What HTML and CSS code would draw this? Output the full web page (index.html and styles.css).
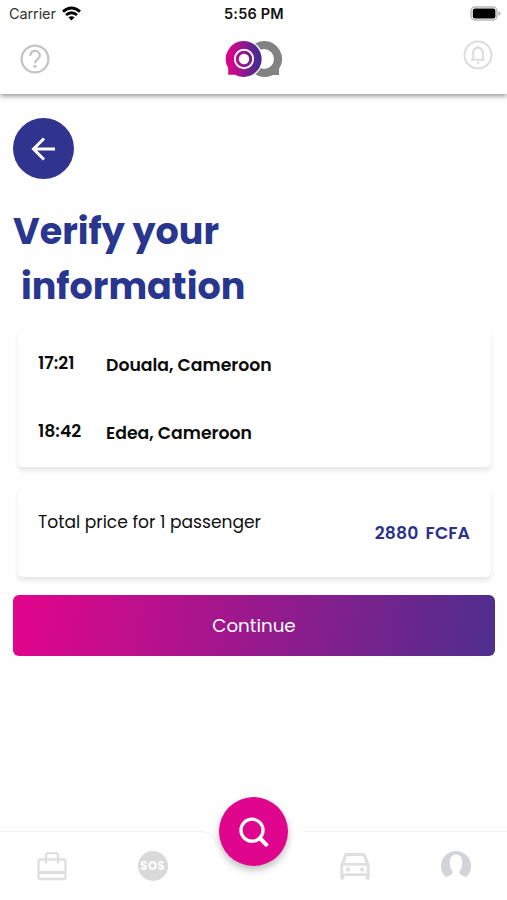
FILE: index.html
```html
<!DOCTYPE html>
<html lang="en">
<head>
<meta charset="utf-8">
<title>Verify your information</title>
<link rel="stylesheet" href="styles.css">
</head>
<body>
<div class="app">
  <header class="header">
    <div class="status">
      <div class="carrier"><span>Carrier</span>
        <svg width="19" height="15" viewBox="0 0 19 15"><g fill="none" stroke="#000" stroke-width="2.9"><path d="M1 5.6Q9.5-1.8 18 5.6"/><path d="M4 9Q9.5 4.4 15 9"/></g><path d="M6.4 11.3Q9.5 9 12.6 11.3L9.5 14.5Z"/></svg>
      </div>
      <div class="time">5:56 PM</div>
      <svg class="battery" width="31" height="15" viewBox="0 0 31 15"><rect x="1" y="1" width="26" height="13" rx="4" fill="#fff" stroke="#b8b8b8" stroke-width="1.5"/><rect x="2.8" y="2.6" width="22.6" height="9.8" rx="2.2"/><path d="M28.5 5.2q2.2.6 2.2 2.3t-2.2 2.3Z" fill="#b8b8b8"/></svg>
    </div>
    <div class="toolbar">
      <svg class="help" width="30" height="30" viewBox="0 0 30 30" fill="none" stroke="#c4c4c4" stroke-width="2.3"><circle cx="15" cy="15" r="13.4"/><path d="M10.3 11.7C10.3 5 19.8 5.6 19.8 11.4C19.8 15 15.1 15.2 15.1 19.2"/><path d="M15 21v2.8" stroke-width="2.8"/></svg>
      <svg class="logo" width="58" height="38" viewBox="0 0 58 38">
        <defs><linearGradient id="brand"><stop offset=".12" stop-color="#d8058c"/><stop offset=".85" stop-color="#50298f"/><stop offset="1" stop-color="#3d3093"/></linearGradient></defs>
        <path fill="#828282" fill-rule="evenodd" d="M39 1a18 18 0 0 1 15 28v6h-6A18 18 0 1 1 39 1ZM39 9a10 10 0 1 0 0 20a10 10 0 0 0 0-20Z"/>
        <circle cx="19" cy="19" r="19" fill="#fff"/>
        <path fill="url(#brand)" d="M19 1a18 18 0 1 1-9 33.8H3.2V28A18 18 0 0 1 19 1Z"/>
        <circle cx="19" cy="19" r="9.2" fill="none" stroke="#fff" stroke-width="1.9"/><circle cx="19" cy="19" r="5.2" fill="#fff"/>
      </svg>
      <svg class="bell" width="30" height="30" viewBox="0 0 30 30" fill="none" stroke="#dcdcdc" stroke-width="2"><circle cx="15" cy="15" r="13.5"/><path d="M8.2 19.7h13.6M10.2 19.7v-6.2C10.2 9.7 12 7.8 15 7.8s4.8 1.9 4.8 5.7v6.2M15 7.8V5.7"/><path d="M13.8 22.8h2.4"/></svg>
    </div>
  </header>
  <main class="main">
    <button class="back" aria-label="Back"><svg width="25" height="24" viewBox="0 0 25 24" fill="none" stroke="#fff" stroke-width="3"><path d="M24 12H2.8M13 1.5L2.5 12L13 22.5"/></svg></button>
    <h1 class="title"><span class="first">Verify your</span><span class="second">information</span></h1>
    <section class="card trip">
      <div class="stop"><span class="hour">17:21</span><span class="place">Douala, Cameroon</span></div>
      <div class="stop"><span class="hour">18:42</span><span class="place">Edea, Cameroon</span></div>
    </section>
    <section class="card fare"><span class="label">Total price for 1 passenger</span><span class="price">2880 FCFA</span></section>
    <button class="continue">Continue</button>
  </main>
  <nav class="nav">
    <svg class="edge" width="507" height="70" viewBox="0 0 507 70"><path d="M0 1.5H201Q213 1.5 216 14C221 38 234 50 254 50S287 38 292 14Q295 1.5 307 1.5H507V70H0Z" fill="#fff"/><path d="M0 1.5H201Q213 1.5 216 14M303 1.5H507" fill="none" stroke="#f5f5f5" stroke-width="1.3"/></svg>
    <div class="item"><svg width="30" height="30" viewBox="0 0 30 30" fill="none" stroke="#dfdfdf" stroke-width="2.3"><rect x="1.5" y="8.5" width="27" height="19.5" rx="1.8"/><path d="M1.5 21.5h27" stroke-width="3.2"/><path d="M9 12.5V4.2Q9 2.2 11 2.2h8q2 0 2 2v8.3"/></svg></div>
    <div class="item"><span class="sos">SOS</span></div>
    <div class="item"><button class="search" aria-label="Search"><svg width="30" height="30" viewBox="0 0 30 30" fill="none" stroke="#fff"><circle cx="13" cy="13.2" r="11" stroke-width="3.3"/><path d="M21 21.3L27.2 27.6" stroke-width="4.2" stroke-linecap="round"/></svg></button></div>
    <div class="item"><svg width="30" height="30" viewBox="0 0 30 30"><path fill="#dfdfdf" fill-rule="evenodd" d="M6.2 2h17.6q1.5 0 2 1.5L29.7 14v13.5q0 1-1 1h-2q-1 0-1-1V25H4.3v2.5q0 1-1 1h-2q-1 0-1-1V14L4.2 3.5Q4.7 2 6.2 2ZM7 5L4.5 12h21L23 5ZM3.3 14.8v7.5h23.4v-7.5Z"/><circle cx="7.9" cy="18.4" r="2.2" fill="#dfdfdf"/><circle cx="22.1" cy="18.4" r="2.2" fill="#dfdfdf"/></svg></div>
    <div class="item"><svg width="30" height="30" viewBox="0 0 30 30"><path fill="#d2d4d7" d="M4.8 26A15 15 0 1 1 25.2 26C21 24.2 17.8 23.5 18.5 20C20.6 17.8 21.2 15.2 21.2 11C21.2 6.2 18.8 3.4 15 3.4S8.8 6.2 8.8 11c0 4.2.6 6.8 2.7 9C12.2 23.5 9 24.2 4.8 26Z"/></svg></div>
  </nav>
</div>
</body>
</html>
```
FILE: styles.css
```css
* { box-sizing: border-box; }
body { margin: 0; background: #fefefe; font-family: Poppins, Inter, sans-serif; color: #111; }
button { border: 0; padding: 0; font: inherit; }
svg { display: block; flex: none; }
span { white-space: nowrap; }
.app { width: 507px; height: 900px; display: flex; flex-direction: column; overflow: hidden; }
.header { height: 94px; flex: none; background: #fff; box-shadow: 0 2px 5px rgba(0, 0, 0, .42); }
.status { height: 28px; display: grid; grid-template-columns: 1fr auto 1fr; align-items: center; padding: 0 6px 0 9px; font: 14.5px Inter, sans-serif; }
.carrier { display: flex; align-items: center; gap: 6px; color: #333; letter-spacing: -.1px; }
.carrier span { margin-top: -2px; }
.carrier svg { margin-top: -2px; }
.time { font-weight: 600; letter-spacing: .2px; color: #111; margin: -2px 1px 0 -1px; }
.battery { justify-self: end; margin-top: -2px; }
.toolbar { display: grid; grid-template-columns: 1fr auto 1fr; align-items: start; padding: 12px 14px 0 20px; }
.help { margin-top: 4px; }
.logo { margin-left: -6px; }
.bell { justify-self: end; }
.main { flex: 1; padding: 24px 12px 0 13px; display: flex; flex-direction: column; }
.back { width: 61px; height: 61px; border-radius: 50%; background: #30348f; display: flex; align-items: center; justify-content: center; }
.title { margin: 25px 0 0; font-size: 36.5px; line-height: 55px; font-weight: 700; color: #29368f; display: flex; flex-direction: column; align-items: flex-start; }
.second { margin-left: 8px; }
.card { margin: 0 4px 0 5px; background: #fff; border-radius: 5px; box-shadow: 0 4px 4px rgba(0, 0, 0, .085); }
.trip { margin-top: 16px; height: 137px; padding: 19px 20px; display: flex; flex-direction: column; gap: 40px; }
.stop { display: grid; grid-template-columns: 68px 1fr; height: 28px; line-height: 28px; font-size: 17.3px; font-weight: 600; color: #0b0b0b; }
.place { padding-top: 2px; }
.fare { margin-top: 21px; height: 89px; padding: 20px 21px 0 20px; display: flex; justify-content: space-between; line-height: 28px; }
.label { font-size: 17.1px; }
.price { margin-top: 11px; font-size: 17.3px; font-weight: 600; color: #2d318b; word-spacing: 3px; letter-spacing: .1px; }
.continue { margin-top: 18px; height: 61px; border-radius: 6px; background: linear-gradient(100deg, #e1058c 2%, #512d8e 98%); color: #fff; font-size: 18.3px; }
.nav { position: relative; height: 70px; flex: none; padding: 21px 0 0 1px; display: grid; grid-template-columns: repeat(5, 101.2px); }
.edge { position: absolute; left: 0; top: 0; }
.item { position: relative; display: flex; justify-content: center; height: 30px; }
.sos { width: 30px; height: 30px; border-radius: 50%; background: #d9d9d9; color: #fff; font-size: 11.5px; font-weight: 700; line-height: 30px; text-align: center; letter-spacing: .6px; }
.search { flex: none; width: 69px; height: 69px; margin-top: -54px; border-radius: 50%; background: #df058c; display: flex; align-items: center; justify-content: center; box-shadow: 0 4px 7px rgba(0, 0, 0, .25); }
```
